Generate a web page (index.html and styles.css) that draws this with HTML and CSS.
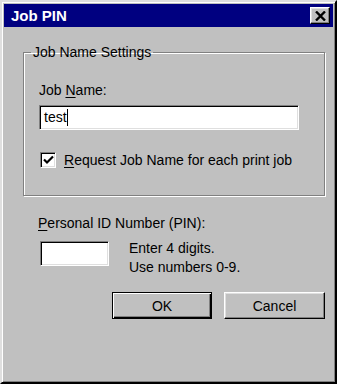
FILE: index.html
```html
<!DOCTYPE html>
<html lang="en">
<head>
  <meta charset="UTF-8" />
  <title>Job PIN</title>
  <link rel="stylesheet" href="styles.css">
</head>
<body>

  <div class="window">
    <div class="titlebar">
      <span class="title">Job PIN</span>
      <button class="close" aria-label="Close">
        <svg width="11" height="10" viewBox="0 0 11 10">
          <path d="M1 0.5 L10 9.5 M10 0.5 L1 9.5" stroke="#000" stroke-width="2.4" fill="none" />
        </svg>
      </button>
    </div>

    <div class="content">
      <fieldset class="group">
        <legend>Job Name Settings</legend>
        <div class="label">Job <u>N</u>ame:</div>
        <div class="field job-name">test<span class="caret"></span></div>
        <label class="check-row">
          <span class="checkbox">
            <svg width="11" height="10" viewBox="0 0 11 10">
              <path d="M1 4.5 L4 7.5 L10 1.5" stroke="#000" stroke-width="2.2" fill="none" />
            </svg>
          </span>
          <span><u>R</u>equest Job Name for each print job</span>
        </label>
      </fieldset>

      <div class="label pin-label"><u>P</u>ersonal ID Number (PIN):</div>
      <div class="pin-row">
        <div class="field pin"></div>
        <div class="hint">Enter 4 digits.<br>Use numbers 0-9.</div>
      </div>

      <div class="buttons">
        <button class="btn btn-default">OK</button>
        <button class="btn">Cancel</button>
      </div>
    </div>
  </div>

</body>
</html>
```

FILE: styles.css
```css
* { box-sizing: border-box; }
body {
  margin: 0;
  background: #c0c0c0;
  font-family: "Liberation Sans", Arial, sans-serif;
  font-size: 14px;
  color: #000;
}
.window {
  width: 337px;
  height: 384px;
  display: flex;
  flex-direction: column;
  padding: 2px;
  background: #c0c0c0;
  border: 2px solid;
  border-color: #dfdfdf #000 #000 #dfdfdf;
  box-shadow: inset 1px 1px #fff, inset -1px -1px #808080;
}
.titlebar {
  height: 23px;
  background: #000080;
  color: #fff;
  display: flex;
  align-items: center;
  justify-content: space-between;
  padding: 0 3px 0 7px;
}
.title { font-weight: bold; font-size: 15px; }
.close {
  width: 20px;
  height: 17px;
  padding: 0;
  background: #c0c0c0;
  border: 1px solid;
  border-color: #fff #000 #000 #fff;
  box-shadow: inset -1px -1px #808080, inset 1px 1px #dfdfdf;
  display: flex;
  align-items: center;
  justify-content: center;
}
.content {
  flex: 1;
  padding: 17px 8px 0 19px;
}
.group {
  margin: 0;
  padding: 0 14px 27px 15px;
  border: 1px solid #808080;
  box-shadow: 1px 1px 0 #fff, inset 1px 1px 0 #fff;
}
.group legend {
  margin-left: -8px;
  padding: 0 2px;
  line-height: 16px;
}
.label { line-height: 16px; }
.group .label { margin-top: 22px; }
u { text-decoration: underline; text-underline-offset: 2px; }
.field {
  height: 25px;
  background: #fff;
  border: 1px solid;
  border-color: #808080 #fff #fff #808080;
  box-shadow: inset 1px 1px #000, inset -1px -1px #dfdfdf;
}
.job-name {
  margin-top: 7px;
  width: 260px;
  padding: 3px 0 0 4px;
  line-height: 17px;
}
.caret {
  display: inline-block;
  width: 1px;
  height: 17px;
  background: #000;
  vertical-align: top;
}
.check-row {
  display: flex;
  align-items: center;
  gap: 8px;
  margin-top: 21px;
  height: 17px;
  margin-left: 1px;
}
.checkbox {
  width: 16px;
  height: 16px;
  background: #fff;
  border: 1px solid;
  border-color: #808080 #fff #fff #808080;
  box-shadow: inset 1px 1px #000, inset -1px -1px #dfdfdf;
  display: flex;
  align-items: center;
  justify-content: center;
}
.pin-label { margin-top: 19px; padding-left: 15px; }
.pin-row {
  display: flex;
  align-items: flex-start;
  gap: 20px;
  margin-top: 10px;
  padding-left: 17px;
}
.pin { width: 69px; }
.hint { line-height: 19px; margin-top: -2px; }
.buttons {
  display: flex;
  justify-content: flex-end;
  gap: 12px;
  margin-top: 15px;
}
.btn {
  width: 101px;
  height: 27px;
  padding: 0;
  background: #c0c0c0;
  font-family: "Liberation Sans", Arial, sans-serif;
  font-size: 14px;
  color: #000;
  border: 1px solid;
  border-color: #fff #000 #000 #fff;
  box-shadow: inset -1px -1px #808080, inset 1px 1px #dfdfdf;
}
.btn-default {
  width: 100px;
  border: 1px solid #000;
  box-shadow: inset 1px 1px #fff, inset -1px -1px #000, inset -2px -2px #808080;
}
```
